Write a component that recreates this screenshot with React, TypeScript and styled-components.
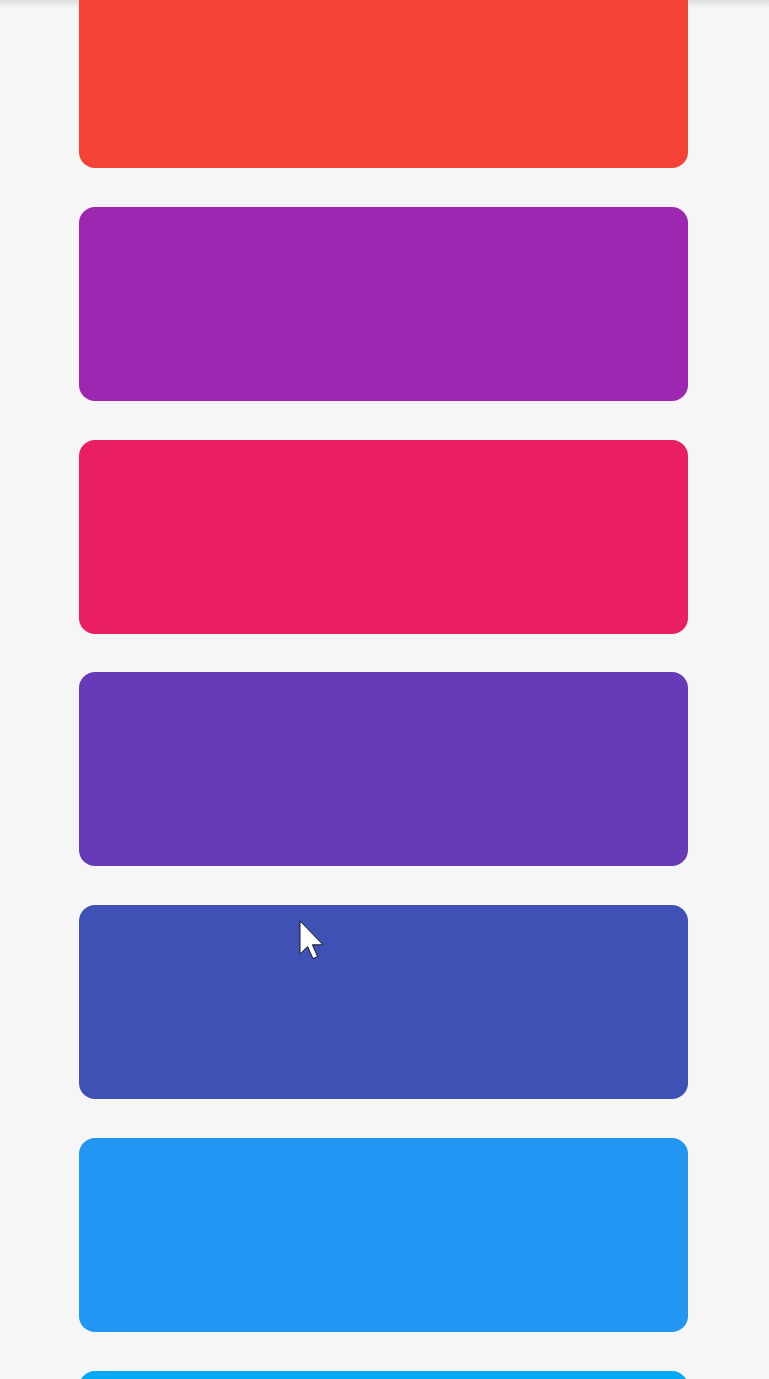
import styled, { createGlobalStyle } from 'styled-components';

const colors = ['#F44336', '#9C27B0', '#E91E63', '#673AB7', '#3F51B5', '#2196F3', '#03A9F4'];

const GlobalStyle = createGlobalStyle`
  html, body {
    margin: 0;
    padding: 0;
    background: #f6f6f6;
    font-family: Roboto, "Liberation Sans", sans-serif;
    overflow: hidden;
  }
`;

const Screen = styled.div`
  position: relative;
  width: 769px;
  height: 1379px;
  overflow: hidden;
  background: #f6f6f6;
`;

const TopShadow = styled.div`
  position: absolute;
  top: 0;
  left: 0;
  right: 0;
  height: 8px;
  background: linear-gradient(to bottom, rgba(0, 0, 0, 0.1), rgba(0, 0, 0, 0));
  z-index: 0;
`;

const List = styled.div`
  position: relative;
  z-index: 1;
  display: flex;
  flex-direction: column;
  gap: 38.8px;
  margin-top: -26px;
  padding-left: 79px;
`;

const Card = styled.div<{ $color: string }>`
  width: 609px;
  height: 194px;
  flex-shrink: 0;
  border-radius: 16px;
  background: ${p => p.$color};
`;

const Pointer = styled.svg`
  position: absolute;
  left: 299px;
  top: 920px;
  z-index: 3;
`;

export default function App() {
  return (
    <>
      <GlobalStyle />
      <Screen>
        <TopShadow />
        <List>
          {colors.map(c => (
            <Card key={c} $color={c} />
          ))}
        </List>
        <Pointer width="26" height="40" viewBox="0 0 13 20">
          <path
            d="M0.5 0.5 L0.5 17 L4.3 13.3 L7 19.3 L9.3 18.3 L6.7 12.4 L12 12.4 Z"
            fill="#fff"
            stroke="#1a1a1a"
            strokeWidth="0.5"
            strokeLinejoin="round"
          />
        </Pointer>
      </Screen>
    </>
  );
}
